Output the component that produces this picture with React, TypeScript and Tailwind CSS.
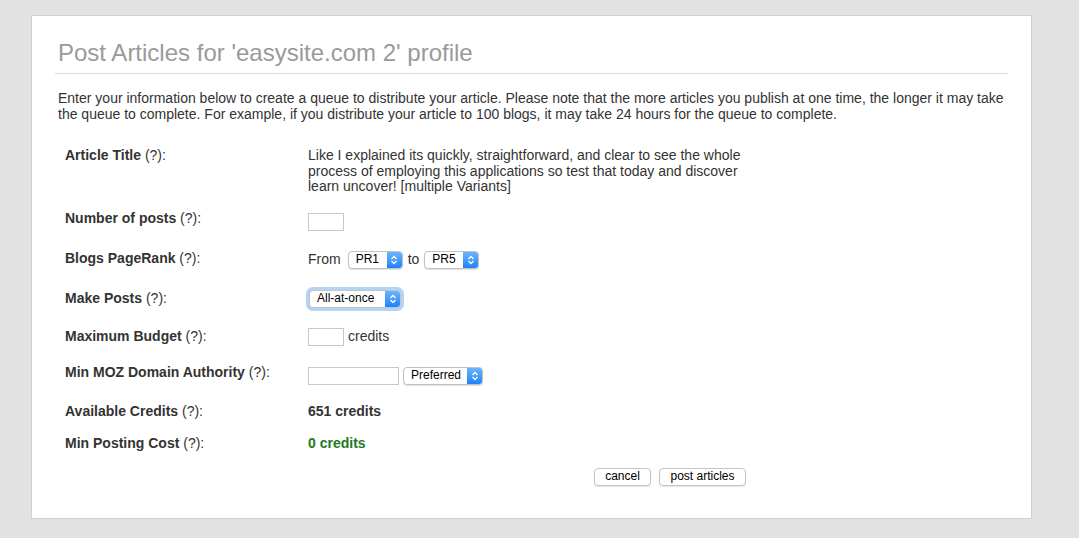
const font = { fontFamily: '"Liberation Sans", Arial, sans-serif' };

function Arrows() {
  return (
    <svg width="8" height="10" viewBox="0 0 8 10" fill="none" stroke="white" strokeWidth="1.3">
      <path d="M1.5 4 L4 1.5 L6.5 4" />
      <path d="M1.5 6 L4 8.5 L6.5 6" />
    </svg>
  );
}

function Select({ label, w, focus }: { label: string; w: string; focus?: boolean }) {
  return (
    <div
      className={`flex h-[18px] ${w} items-stretch rounded-[4px] border border-[#c3c3c3] bg-white ${
        focus ? "shadow-[0_0_0_3px_#b3d3f7]" : "shadow-[0_1px_1px_rgba(0,0,0,0.12)]"
      }`}
    >
      <span className="flex flex-1 items-center pl-[7px] text-[12px] text-black">{label}</span>
      <span className="flex w-[15px] items-center justify-center rounded-r-[3px] bg-gradient-to-b from-[#6cb3fa] to-[#1a82fb]">
        <Arrows />
      </span>
    </div>
  );
}

function Row({ label, children, h }: { label: string; children: React.ReactNode; h: string }) {
  return (
    <div className={`flex ${h}`}>
      <div className="w-[243px] shrink-0 text-[14px] text-[#333]">
        <b className="font-bold">{label}</b> (?):
      </div>
      <div className="text-[14px] text-[#333]">{children}</div>
    </div>
  );
}

export default function App() {
  return (
    <div className="h-[538px] w-[1079px] bg-[#e2e2e2] pt-[15px] pl-[31px]" style={font}>
      <div className="h-[504px] w-[1001px] border border-[#cfcfcf] bg-white px-[23px] pt-[22px]">
        <h1 className="border-b border-[#dcdcdc] pb-[5px] pl-[3px] text-[24px] leading-[30px] text-[#9a9a9a]">
          Post Articles for 'easysite.com 2' profile
        </h1>
        <p className="mt-[16px] pl-[3px] text-[14px] leading-[16px] text-[#333]">
          Enter your information below to create a queue to distribute your article. Please note that the more articles
          you publish at one time, the longer it may take the queue to complete. For example, if you distribute your
          article to 100 blogs, it may take 24 hours for the queue to complete.
        </p>
        <div className="mt-[26px] pl-[10px] leading-[15.5px]">
          <Row label="Article Title" h="h-[63px]">
            <div className="w-[445px]">
              Like I explained its quickly, straightforward, and clear to see the whole process of employing this
              applications so test that today and discover learn uncover! [multiple Variants]
            </div>
          </Row>
          <Row label="Number of posts" h="h-[40px]">
            <div className="mt-[2px] h-[18px] w-[36px] border border-[#c8c8c8]" />
          </Row>
          <Row label="Blogs PageRank" h="h-[40px]">
            <div className="flex items-center gap-[5px]">
              <span className="mr-[2px]">From</span>
              <Select label="PR1" w="w-[55px]" />
              <span>to</span>
              <Select label="PR5" w="w-[55px]" />
            </div>
          </Row>
          <Row label="Make Posts" h="h-[38px]">
            <div className="-mt-[1px] pl-[1px]">
              <Select label="All-at-once" w="w-[92px]" focus />
            </div>
          </Row>
          <Row label="Maximum Budget" h="h-[36px]">
            <div className="-mt-[1px] flex items-center gap-[4px]">
              <div className="h-[18px] w-[36px] border border-[#c8c8c8]" />
              <span>credits</span>
            </div>
          </Row>
          <Row label="Min MOZ Domain Authority" h="h-[39px]">
            <div className="mt-[2px] flex items-center gap-[4px]">
              <div className="h-[18px] w-[91px] border border-[#c8c8c8]" />
              <Select label="Preferred" w="w-[80px]" />
            </div>
          </Row>
          <Row label="Available Credits" h="h-[32px]">
            <b className="font-bold">651 credits</b>
          </Row>
          <Row label="Min Posting Cost" h="h-[32px]">
            <b className="font-bold text-[#1f7a1f]">0 credits</b>
          </Row>
          <div className="flex justify-end gap-[8px] pr-[262px]">
            <button className="h-[18px] w-[57px] rounded-[4px] border border-[#c5c5c5] bg-white text-[12px] text-black shadow-[0_1px_1px_rgba(0,0,0,0.1)]">
              cancel
            </button>
            <button className="h-[18px] w-[87px] rounded-[4px] border border-[#c5c5c5] bg-white text-[12px] text-black shadow-[0_1px_1px_rgba(0,0,0,0.1)]">
              post articles
            </button>
          </div>
        </div>
      </div>
    </div>
  );
}
